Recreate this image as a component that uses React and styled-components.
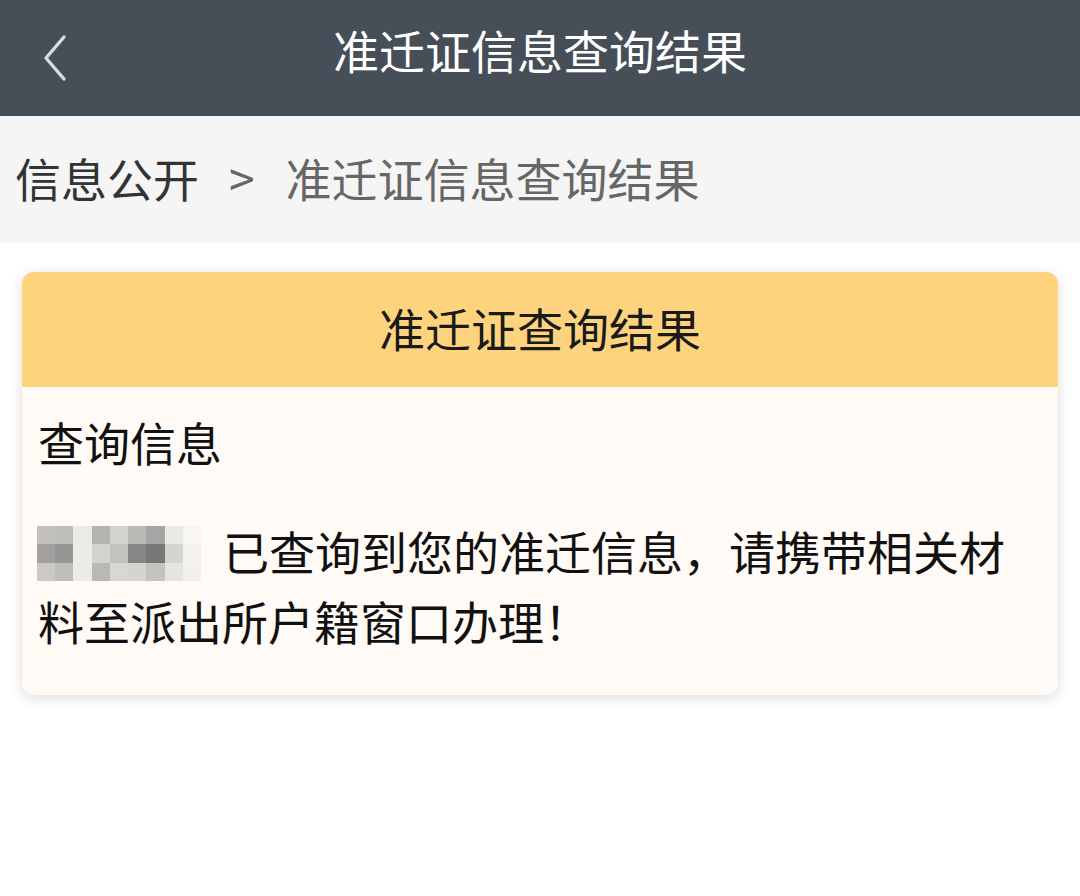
import styled, { createGlobalStyle } from 'styled-components';

const GlobalStyle = createGlobalStyle`
  html, body {
    margin: 0;
    padding: 0;
    background: #ffffff;
  }
  body {
    font-family: "Noto Sans CJK SC", "Noto Sans", sans-serif;
  }
`;

const Page = styled.div`
  width: 1080px;
  min-height: 896px;
  background: #ffffff;
`;

const TopBar = styled.header`
  height: 116px;
  box-sizing: border-box;
  padding-bottom: 18px;
  background: #464e57;
  display: grid;
  grid-template-columns: 1fr auto 1fr;
  align-items: center;
`;

const BackButton = styled.button`
  justify-self: start;
  margin-left: 42px;
  margin-top: 18px;
  padding: 0;
  border: none;
  background: none;
  display: flex;
  align-items: center;
  cursor: pointer;
`;

const Title = styled.h1`
  margin: 0;
  font-size: 46px;
  font-weight: 400;
  color: #ffffff;
  line-height: 1;
`;

const Crumbs = styled.nav`
  height: 127px;
  box-sizing: border-box;
  padding: 0 0 6px 15px;
  background: #f5f5f5;
  display: flex;
  align-items: center;
  font-size: 46px;
  line-height: 1;
`;

const Crumb = styled.span`
  color: ${({ $current }) => ($current ? '#666666' : '#333333')};
`;

const Separator = styled.span`
  color: #666666;
  margin: 0 31px 0 30px;
`;

const Card = styled.section`
  margin: 29px 22px 0;
  border-radius: 12px;
  overflow: hidden;
  background: #fffaf5;
  box-shadow: 0 3px 14px rgba(0, 0, 0, 0.14);
`;

const CardHead = styled.div`
  height: 115px;
  box-sizing: border-box;
  padding-bottom: 6px;
  background: #fdd47d;
  display: flex;
  align-items: center;
  justify-content: center;
  font-size: 46px;
  line-height: 1;
  color: #1a1a1a;
`;

const CardBody = styled.div`
  padding: 19px 16px 40px 16px;
  color: #111111;
  font-size: 46px;
`;

const Label = styled.div`
  line-height: 70px;
`;

const Message = styled.p`
  margin: 39px 0 0;
  line-height: 70px;
`;

const Mosaic = styled.span`
  display: inline-block;
  overflow: hidden;
  width: 164px;
  height: 55px;
  vertical-align: -11px;
  margin: 0 22px 0 -1px;
`;

const MosaicGrid = styled.span`
  display: grid;
  grid-template-columns: repeat(9, 1fr);
  grid-template-rows: repeat(3, 1fr);
  width: 100%;
  height: 100%;
  filter: blur(0.6px);
`;

const Tile = styled.span`
  background: ${({ $c }) => $c};
`;

const tiles = [
  '#c2c0bd', '#c0beba', '#ebeae7', '#b6b4b1', '#d4d2ce', '#bcbab7', '#a5a5a3', '#ebe9e5', '#f8f6f2',
  '#a2a1a0', '#979694', '#ecebe8', '#d5d3d0', '#c4c2be', '#878684', '#787775', '#d6d4d0', '#f4f2ee',
  '#cbc9c6', '#bfbdba', '#ecebe8', '#bab8b5', '#d9d7d3', '#d6d4d0', '#c5c3bf', '#e6e4e0', '#f2f0ec',
];

const ChevronLeft = () => (
  <svg width="26" height="48" viewBox="0 0 26 48" fill="none">
    <polyline
      points="22,3 4,24 22,45"
      stroke="#d9dcdf"
      strokeWidth="3.4"
      strokeLinecap="round"
      strokeLinejoin="round"
    />
  </svg>
);

export default function App() {
  return (
    <Page>
      <GlobalStyle />
      <TopBar>
        <BackButton aria-label="返回">
          <ChevronLeft />
        </BackButton>
        <Title>准迁证信息查询结果</Title>
        <span />
      </TopBar>
      <Crumbs>
        <Crumb>信息公开</Crumb>
        <Separator>&gt;</Separator>
        <Crumb $current>准迁证信息查询结果</Crumb>
      </Crumbs>
      <Card>
        <CardHead>准迁证查询结果</CardHead>
        <CardBody>
          <Label>查询信息</Label>
          <Message>
            <Mosaic aria-hidden="true">
              <MosaicGrid>
                {tiles.map((c, i) => (
                  <Tile key={i} $c={c} />
                ))}
              </MosaicGrid>
            </Mosaic>
            已查询到您的准迁信息，请携带相关材料至派出所户籍窗口办理！
          </Message>
        </CardBody>
      </Card>
    </Page>
  );
}
